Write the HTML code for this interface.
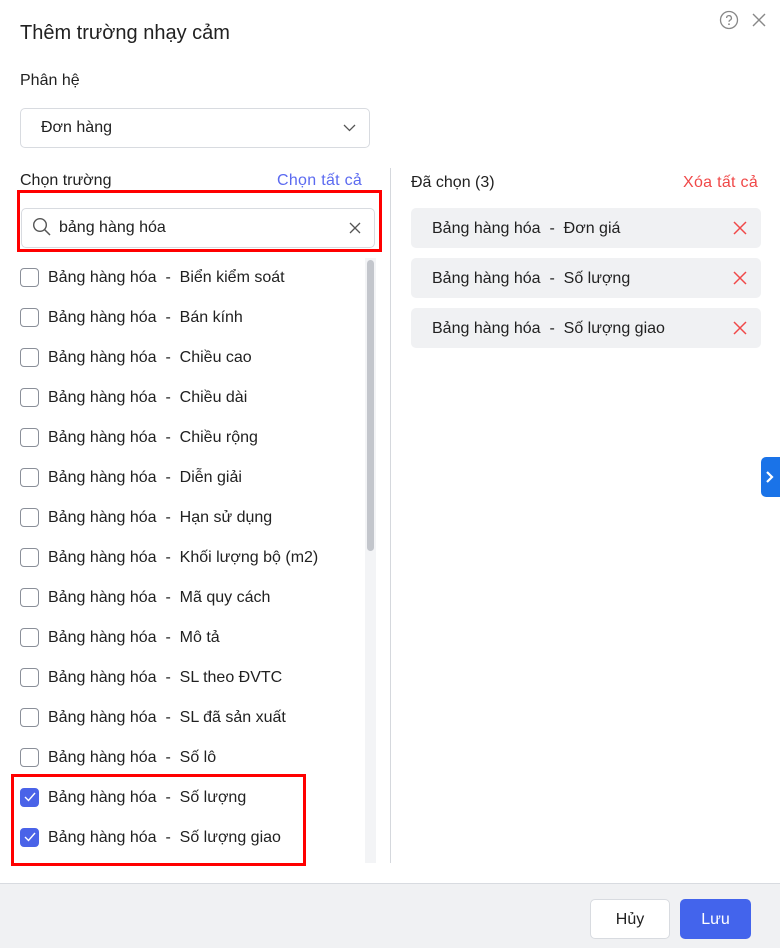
<!DOCTYPE html>
<html><head><meta charset="utf-8"><style>
*{box-sizing:border-box;margin:0;padding:0}
body{width:780px;height:948px;background:#fff;font-family:"Liberation Sans",sans-serif;color:#212121;position:relative;overflow:hidden}
.a{position:absolute}
.t{font-size:16px;white-space:nowrap}
.row{position:absolute;left:20px;height:40px;display:flex;align-items:center;font-size:16px;white-space:nowrap;padding-top:2px}
.cb{width:19px;height:19px;border:1.5px solid #8a8f99;border-radius:4px;margin-right:9px;background:#fff;margin-top:-2px}
.cb.on{background:#4a63e8;border-color:#4a63e8;display:flex;align-items:center;justify-content:center}
.chip{position:absolute;left:411px;width:350px;height:40px;background:#f0f1f3;border-radius:5px;font-size:16px;display:flex;align-items:center;padding-left:21px;padding-top:1px}
.chip svg{position:absolute;right:14px;top:13px}
</style></head><body>
<div class="a" style="left:20px;top:22px;font-size:20px">Thêm trường nhạy cảm</div>
<svg class="a" style="left:719px;top:10px" width="20" height="20" viewBox="0 0 20 20"><circle cx="10" cy="10" r="8.5" fill="none" stroke="#888" stroke-width="1.3"/><path d="M7.6 8a2.4 2.4 0 1 1 3.4 2.2c-.7.4-1 .8-1 1.6" fill="none" stroke="#888" stroke-width="1.3"/><circle cx="10" cy="14.2" r=".9" fill="#888"/></svg>
<svg class="a" style="left:752px;top:13px" width="14" height="14" viewBox="0 0 14 14"><path d="M1 1L13 13M13 1L1 13" stroke="#888" stroke-width="1.4"/></svg>
<div class="a t" style="left:20px;top:72px">Phân hệ</div>
<div class="a" style="left:20px;top:108px;width:350px;height:40px;border:1px solid #d8dbe0;border-radius:5px"></div>
<div class="a t" style="left:41px;top:119px">Đơn hàng</div>
<svg class="a" style="left:343px;top:124px" width="13" height="8" viewBox="0 0 13 8"><path d="M1 1l5.5 5.5L12 1" fill="none" stroke="#555" stroke-width="1.3"/></svg>
<div class="a t" style="left:20px;top:172px">Chọn trường</div>
<div class="a t" style="left:277px;top:172px;color:#5b6af0;letter-spacing:0.3px">Chọn tất cả</div>
<div class="a" style="left:17px;top:190px;width:365px;height:62px;border:3px solid #f00"></div>
<div class="a" style="left:21px;top:208px;width:354px;height:40px;border:1px solid #d8dbe0;border-radius:5px"></div>
<svg class="a" style="left:32px;top:217px" width="20" height="20" viewBox="0 0 20 20"><circle cx="8" cy="8" r="6.3" fill="none" stroke="#555" stroke-width="1.4"/><path d="M12.6 12.6L18 18" stroke="#555" stroke-width="1.5"/></svg>
<div class="a t" style="left:59px;top:219px">bảng hàng hóa</div>
<svg class="a" style="left:349px;top:222px" width="12" height="12" viewBox="0 0 12 12"><path d="M1 1L11 11M11 1L1 11" stroke="#555" stroke-width="1.3"/></svg>
<div class="a" style="left:365px;top:258px;width:11px;height:605px;background:#f3f4f6"></div>
<div class="a" style="left:367px;top:260px;width:7px;height:291px;background:#c3c6cc;border-radius:4px"></div>
<div class="a" style="left:390px;top:168px;width:1px;height:695px;background:#d5d8dd"></div>

<div class="row" style="top:257px"><div class="cb"></div>Bảng hàng hóa&nbsp; - &nbsp;Biển kiểm soát</div>
<div class="row" style="top:297px"><div class="cb"></div>Bảng hàng hóa&nbsp; - &nbsp;Bán kính</div>
<div class="row" style="top:337px"><div class="cb"></div>Bảng hàng hóa&nbsp; - &nbsp;Chiều cao</div>
<div class="row" style="top:377px"><div class="cb"></div>Bảng hàng hóa&nbsp; - &nbsp;Chiều dài</div>
<div class="row" style="top:417px"><div class="cb"></div>Bảng hàng hóa&nbsp; - &nbsp;Chiều rộng</div>
<div class="row" style="top:457px"><div class="cb"></div>Bảng hàng hóa&nbsp; - &nbsp;Diễn giải</div>
<div class="row" style="top:497px"><div class="cb"></div>Bảng hàng hóa&nbsp; - &nbsp;Hạn sử dụng</div>
<div class="row" style="top:537px"><div class="cb"></div>Bảng hàng hóa&nbsp; - &nbsp;Khối lượng bộ (m2)</div>
<div class="row" style="top:577px"><div class="cb"></div>Bảng hàng hóa&nbsp; - &nbsp;Mã quy cách</div>
<div class="row" style="top:617px"><div class="cb"></div>Bảng hàng hóa&nbsp; - &nbsp;Mô tả</div>
<div class="row" style="top:657px"><div class="cb"></div>Bảng hàng hóa&nbsp; - &nbsp;SL theo ĐVTC</div>
<div class="row" style="top:697px"><div class="cb"></div>Bảng hàng hóa&nbsp; - &nbsp;SL đã sản xuất</div>
<div class="row" style="top:737px"><div class="cb"></div>Bảng hàng hóa&nbsp; - &nbsp;Số lô</div>
<div class="row" style="top:777px"><div class="cb on"><svg width="12" height="10" viewBox="0 0 12 10"><path d="M1 5l3.5 3.5L11 1" fill="none" stroke="#fff" stroke-width="1.4"/></svg></div>Bảng hàng hóa&nbsp; - &nbsp;Số lượng</div>
<div class="row" style="top:817px"><div class="cb on"><svg width="12" height="10" viewBox="0 0 12 10"><path d="M1 5l3.5 3.5L11 1" fill="none" stroke="#fff" stroke-width="1.4"/></svg></div>Bảng hàng hóa&nbsp; - &nbsp;Số lượng giao</div>
<div class="a" style="left:11px;top:774px;width:295px;height:92px;border:3px solid #f00"></div>

<div class="a t" style="left:411px;top:174px">Đã chọn (3)</div>
<div class="a t" style="left:683px;top:174px;color:#f04848;letter-spacing:0.3px">Xóa tất cả</div>
<div class="chip" style="top:208px">Bảng hàng hóa&nbsp; - &nbsp;Đơn giá<svg width="14" height="14" viewBox="0 0 14 14"><path d="M1 1L13 13M13 1L1 13" stroke="#f04848" stroke-width="1.5"/></svg></div>
<div class="chip" style="top:258px">Bảng hàng hóa&nbsp; - &nbsp;Số lượng<svg width="14" height="14" viewBox="0 0 14 14"><path d="M1 1L13 13M13 1L1 13" stroke="#f04848" stroke-width="1.5"/></svg></div>
<div class="chip" style="top:308px">Bảng hàng hóa&nbsp; - &nbsp;Số lượng giao<svg width="14" height="14" viewBox="0 0 14 14"><path d="M1 1L13 13M13 1L1 13" stroke="#f04848" stroke-width="1.5"/></svg></div>

<div class="a" style="left:761px;top:457px;width:19px;height:40px;background:#1a73e8;border-radius:5px 0 0 5px"></div>
<svg class="a" style="left:765px;top:470px" width="10" height="14" viewBox="0 0 10 14"><path d="M2 2l5 5-5 5" fill="none" stroke="#fff" stroke-width="2.2"/></svg>

<div class="a" style="left:0;top:883px;width:780px;height:65px;background:#f0f1f3;border-top:1px solid #d8dbe0"></div>
<div class="a" style="left:590px;top:899px;width:80px;height:40px;background:#fff;border:1px solid #d8dbe0;border-radius:5px;font-size:16px;display:flex;align-items:center;justify-content:center;padding-top:2px">Hủy</div>
<div class="a" style="left:680px;top:899px;width:71px;height:40px;background:#4364ec;color:#fff;border-radius:5px;font-size:16px;display:flex;align-items:center;justify-content:center;padding-top:2px">Lưu</div>
</body></html>
